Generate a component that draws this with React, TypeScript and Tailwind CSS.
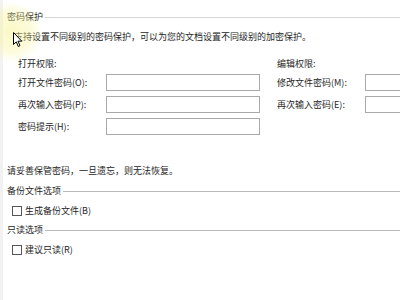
const font = "font-['Microsoft_YaHei','Noto_Sans_CJK_SC',sans-serif]";

function GroupTitle({ title, line = "bg-[#b9b9b9]" }: { title: string; line?: string }) {
  return (
    <div className="flex items-center h-[14px]">
      <span className="whitespace-nowrap">{title}</span>
      <div className={`flex-1 h-px ml-[2px] ${line}`} />
    </div>
  );
}

function Field({ label, inputClass }: { label: string; inputClass: string }) {
  return (
    <div className="flex items-center h-[17px] mb-[5px]">
      <span className="w-[88px] shrink-0 whitespace-nowrap">{label}</span>
      <div className={`h-[17px] border border-[#a9a9a9] bg-white ${inputClass}`} />
    </div>
  );
}

function Check({ label }: { label: string }) {
  return (
    <div className="flex items-center h-[14px] pl-[5px]">
      <div className="w-[10px] h-[10px] border border-[#555] bg-white mr-[3px]" />
      <span>{label}</span>
    </div>
  );
}

export default function App() {
  return (
    <div className={`relative w-[400px] h-[300px] overflow-hidden bg-white text-[9px] leading-[14px] text-[#262626] ${font}`}>
      {/* left edge strip */}
      <div className="absolute left-0 top-0 bottom-0 w-[3px] bg-[#f2f2f2]" />

      <div className="pl-[7px] pt-[10px]">
        <GroupTitle title="密码保护" line="bg-[#d6d6d6]" />
        <div className="mt-[6px] pl-[7px] h-[14px] whitespace-nowrap">
          支持设置不同级别的密码保护，可以为您的文档设置不同级别的加密保护。
        </div>

        <div className="flex mt-[13px] pl-[11px]">
          <div className="w-[259px] shrink-0">
            <div className="h-[14px] mb-[3px]">打开权限:</div>
            <Field label="打开文件密码(O):" inputClass="w-[154px]" />
            <Field label="再次输入密码(P):" inputClass="w-[154px]" />
            <Field label="密码提示(H):" inputClass="w-[154px]" />
          </div>
          <div className="shrink-0">
            <div className="h-[14px] mb-[3px]">编辑权限:</div>
            <Field label="修改文件密码(M):" inputClass="w-[100px]" />
            <Field label="再次输入密码(E):" inputClass="w-[100px]" />
          </div>
        </div>

        <div className="mt-[24px] h-[14px] whitespace-nowrap">请妥善保管密码，一旦遗忘，则无法恢复。</div>
        <div className="mt-[6px]">
          <GroupTitle title="备份文件选项" />
        </div>
        <div className="mt-[6px]">
          <Check label="生成备份文件(B)" />
        </div>
        <div className="mt-[5px]">
          <GroupTitle title="只读选项" />
        </div>
        <div className="mt-[6px]">
          <Check label="建议只读(R)" />
        </div>
      </div>

      {/* cursor highlight */}
      <div className="absolute left-[-18px] top-[2px] w-[60px] h-[60px] rounded-full bg-[radial-gradient(circle,rgba(248,244,150,0.55)_0%,rgba(248,244,150,0.35)_45%,rgba(248,244,150,0)_72%)] pointer-events-none" />
      <svg className="absolute left-[13px] top-[32px]" width="10" height="16" viewBox="0 0 10 16">
        <path d="M0.5 0.5 L0.5 12.5 L3.3 9.8 L5.3 14.5 L7 13.7 L5 9.2 L8.8 9.2 Z" fill="#fff" stroke="#000" strokeWidth="1" strokeLinejoin="round" />
      </svg>
    </div>
  );
}
